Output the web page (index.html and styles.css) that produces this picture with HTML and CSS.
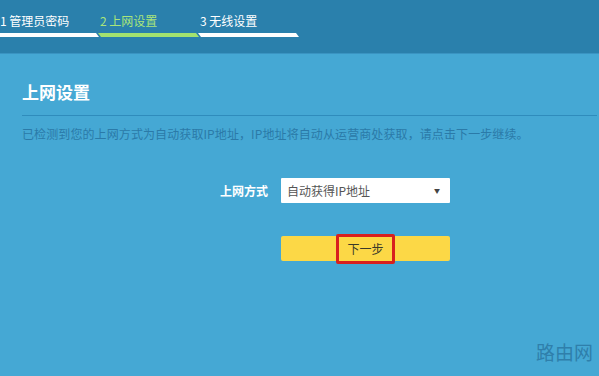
FILE: index.html
```html
<!DOCTYPE html>
<html lang="zh">
<head>
<meta charset="utf-8">
<link rel="stylesheet" href="styles.css">
</head>
<body>
<header class="top">
  <nav class="steps">
    <div class="step done"><span class="step-label">1 管理员密码</span><i class="bar first"></i></div>
    <div class="step active"><span class="step-label">2 上网设置</span><i class="bar"></i></div>
    <div class="step"><span class="step-label">3 无线设置</span><i class="bar"></i></div>
  </nav>
</header>
<main class="panel">
  <h1 class="title">上网设置</h1>
  <p class="desc">已检测到您的上网方式为自动获取IP地址，IP地址将自动从运营商处获取，请点击下一步继续。</p>
  <div class="form">
    <label class="form-label">上网方式</label>
    <div class="select"><span>自动获得IP地址</span><span class="caret">▼</span></div>
    <span></span>
    <div class="btn"><span class="btn-text">下一步</span></div>
  </div>
</main>
<div class="watermark">路由网</div>
</body>
</html>
```
FILE: styles.css
```css
html, body {
  margin: 0;
  height: 100%;
}
body {
  background: #45a8d4;
  font-family: "Noto Sans CJK SC", "Noto Sans", sans-serif;
  position: relative;
  overflow: hidden;
}
.top {
  background: #2a80ac;
  height: 54px;
  box-sizing: border-box;
  padding-top: 12px;
  border-bottom: 1px solid #3a94c2;
}
.steps {
  display: flex;
}
.step {
  width: 100px;
  display: flex;
  flex-direction: column;
}
.step-label {
  font-size: 12px;
  line-height: 18px;
  color: #ffffff;
  height: 21px;
}
.step.active .step-label {
  color: #a9e57a;
}
.bar {
  display: block;
  height: 4px;
  background: #ffffff;
  margin-left: -2px;
  margin-right: 1px;
  clip-path: polygon(0 0, calc(100% - 3px) 0, 100% 100%, 3px 100%);
}
.bar.first {
  margin-left: 0;
  clip-path: polygon(0 0, calc(100% - 3px) 0, 100% 100%, 0 100%);
}
.step.active .bar {
  background: #a3e26f;
}
.panel {
  padding: 27px 2px 0 22px;
}
.title {
  margin: 0;
  font-size: 17px;
  font-weight: bold;
  color: #ffffff;
  line-height: 22px;
  padding-bottom: 12px;
  border-bottom: 1px solid #2f8cbc;
}
.desc {
  margin: 9px 0 0;
  font-size: 12px;
  letter-spacing: 0.1px;
  line-height: 17px;
  color: #2b7aa8;
}
.form {
  margin-top: 36px;
  display: grid;
  grid-template-columns: 246px 169px;
  column-gap: 13px;
  row-gap: 33px;
  align-items: center;
}
.form-label {
  text-align: right;
  font-size: 12px;
  font-weight: bold;
  color: #ffffff;
}
.select {
  height: 25px;
  background: #ffffff;
  display: flex;
  align-items: center;
  justify-content: space-between;
  padding: 0 10px 0 6px;
  font-size: 12px;
  color: #555555;
  border-radius: 1px;
}
.caret {
  font-size: 6px;
  color: #444444;
}
.btn {
  height: 25px;
  background: #fcd846;
  border-radius: 2px;
  display: flex;
  justify-content: center;
  align-items: center;
}
.btn-text {
  font-size: 12px;
  color: #3a3a2a;
  border: 3px solid #d8201e;
  border-radius: 2px;
  padding: 6px 8px;
  line-height: 12px;
}
.watermark {
  position: absolute;
  right: 6px;
  bottom: 13px;
  font-size: 19px;
  color: #2f7fab;
  line-height: 22px;
}
```
